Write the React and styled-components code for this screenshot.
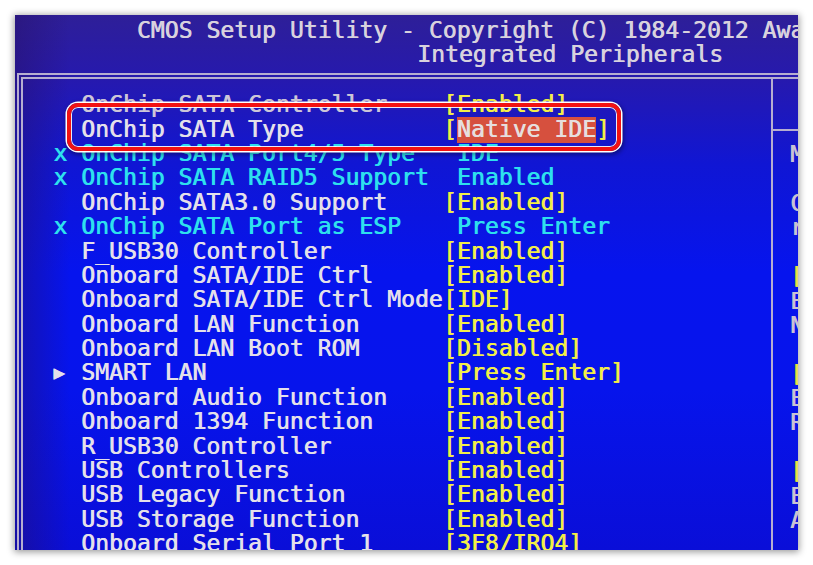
import React from 'react'
import styled, { createGlobalStyle } from 'styled-components'

const CH = 13.92
const ROW = 24.4

const colors = {
  label: '#e4e0ea',
  dim: '#cdc6d8',
  title: '#d8d2de',
  value: '#f2ee48',
  off: '#2ee0ee',
  line: '#b6aed0',
  select: '#d6503e'
}

const GlobalStyle = createGlobalStyle`
  html, body {
    margin: 0;
    width: 813px;
    height: 565px;
    overflow: hidden;
    background: #ffffff;
  }
`

const Page = styled.div`
  position: relative;
  box-sizing: border-box;
  width: 813px;
  height: 565px;
  padding: 15px 15px 15px 15px;
`

const Screen = styled.div`
  width: 783px;
  height: 535px;
  overflow: hidden;
  display: flex;
  flex-direction: column;
  background:
    linear-gradient(90deg, rgba(40, 16, 100, 0.45) 0%, rgba(40, 16, 100, 0) 7%),
    linear-gradient(
      180deg,
      #2e1f98 0%,
      #2619ae 12%,
      #1016d4 28%,
      #0614ee 48%,
      #0614ec 70%,
      #0a0ed8 100%
    );
  box-shadow: 0 1px 7px 1px rgba(0, 0, 0, 0.4);
  font-family: 'DejaVu Sans Mono', 'Liberation Mono', monospace;
  font-size: 23.1px;
  line-height: ${ROW}px;
  white-space: pre;
  text-shadow: 0.7px 0 0 currentColor;
`

const Header = styled.div`
  flex: 0 0 58px;
  box-sizing: border-box;
  padding-top: 3px;
  color: ${colors.title};
`

const HeaderLine = styled.div`
  height: ${ROW}px;
  padding-left: ${props => props.indent}px;
`

const Frame = styled.div`
  flex: 1 0 auto;
  display: flex;
  margin-left: 2px;
  border-top: 6px double ${colors.line};
  border-left: 6px double ${colors.line};
`

const Main = styled.div`
  box-sizing: border-box;
  flex: 0 0 748px;
  padding: 13.2px 0 0 30.2px;
`

const Row = styled.div`
  display: grid;
  grid-template-columns: ${2 * CH}px ${26 * CH}px auto;
  height: ${ROW}px;
  color: ${props =>
    props.tone === 'off' ? colors.off : props.tone === 'dim' ? colors.dim : colors.label};
`

const Mark = styled.span`
  color: ${props => (props.arrow ? colors.label : colors.off)};
  font-size: ${props => (props.arrow ? '19px' : 'inherit')};
`

const Value = styled.span`
  color: ${props => (props.off ? colors.off : colors.value)};
`

const Selected = styled.span`
  display: inline-block;
  height: 26px;
  vertical-align: top;
  background: ${colors.select};
  color: #e6dede;
`

const Help = styled.div`
  flex: 0 0 260px;
  border-left: 2px solid ${colors.line};
`

const HelpHead = styled.div`
  box-sizing: border-box;
  height: 52px;
  padding-top: 13px;
  text-align: center;
  color: ${colors.title};
  border-bottom: 2px solid ${colors.line};
`

const HelpBody = styled.div`
  padding: 11.2px 0 0 17px;
`

const HelpLine = styled.div`
  height: ${ROW}px;
  color: ${props => (props.option ? '#e6e046' : '#c8c2d4')};
`

const Marker = styled.div`
  position: absolute;
  left: 67px;
  top: 103px;
  box-sizing: border-box;
  width: 554px;
  height: 48px;
  border: 4px solid #f21212;
  border-radius: 11px;
  box-shadow:
    0 0 0 1.5px #ffffff,
    inset 0 0 0 1px rgba(255, 255, 255, 0.9),
    1px 2px 4px 2px rgba(0, 0, 0, 0.35);
  pointer-events: none;
`

const items = [
  { label: 'OnChip SATA Controller', value: '[Enabled]', tone: 'dim' },
  { label: 'OnChip SATA Type', value: 'Native IDE', selected: true },
  { mark: 'x', label: 'OnChip SATA Port4/5 Type', value: ' IDE', tone: 'off' },
  { mark: 'x', label: 'OnChip SATA RAID5 Support', value: ' Enabled', tone: 'off' },
  { label: 'OnChip SATA3.0 Support', value: '[Enabled]' },
  { mark: 'x', label: 'OnChip SATA Port as ESP', value: ' Press Enter', tone: 'off' },
  { label: 'F_USB30 Controller', value: '[Enabled]' },
  { label: 'Onboard SATA/IDE Ctrl', value: '[Enabled]' },
  { label: 'Onboard SATA/IDE Ctrl Mode', value: '[IDE]' },
  { label: 'Onboard LAN Function', value: '[Enabled]' },
  { label: 'Onboard LAN Boot ROM', value: '[Disabled]' },
  { mark: '▶', label: 'SMART LAN', value: '[Press Enter]' },
  { label: 'Onboard Audio Function', value: '[Enabled]' },
  { label: 'Onboard 1394 Function', value: '[Enabled]' },
  { label: 'R_USB30 Controller', value: '[Enabled]' },
  { label: 'USB Controllers', value: '[Enabled]' },
  { label: 'USB Legacy Function', value: '[Enabled]' },
  { label: 'USB Storage Function', value: '[Enabled]' },
  { label: 'Onboard Serial Port 1', value: '[3F8/IRQ4]' }
]

const help = [
  { text: 'Menu Level   ▶' },
  { text: '' },
  { text: 'Choose the SATA' },
  { text: 'run mode' },
  { text: '' },
  { text: '[Native IDE]', option: true },
  { text: 'Enables' },
  { text: 'Native IDE mode' },
  { text: '' },
  { text: '[RAID]', option: true },
  { text: 'Enables' },
  { text: 'RAID mode' },
  { text: '' },
  { text: '[AHCI]', option: true },
  { text: 'Enables' },
  { text: 'AHCI mode' }
]

const SetupRow = ({ mark, label, value, tone, selected }) => (
  <Row tone={tone}>
    <Mark arrow={mark === '▶'}>{mark || ''}</Mark>
    <span>{label}</span>
    {selected ? (
      <Value>
        [<Selected>{value}</Selected>]
      </Value>
    ) : (
      <Value off={tone === 'off'}>{value}</Value>
    )}
  </Row>
)

const App = () => (
  <Page>
    <GlobalStyle />
    <Screen>
      <Header>
        <HeaderLine indent={121.7}>
          CMOS Setup Utility - Copyright (C) 1984-2012 Award Software
        </HeaderLine>
        <HeaderLine indent={402}>Integrated Peripherals</HeaderLine>
      </Header>
      <Frame>
        <Main>
          {items.map(item => (
            <SetupRow key={item.label} {...item} />
          ))}
        </Main>
        <Help>
          <HelpHead>Item Help</HelpHead>
          <HelpBody>
            {help.map((line, i) => (
              <HelpLine key={i} option={line.option}>
                {line.text}
              </HelpLine>
            ))}
          </HelpBody>
        </Help>
      </Frame>
    </Screen>
    <Marker />
  </Page>
)

export default App
